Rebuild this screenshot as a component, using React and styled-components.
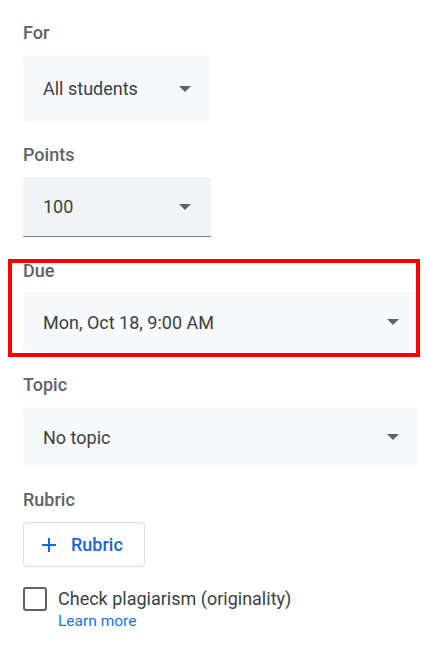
import React from "react";
import styled, { createGlobalStyle } from "styled-components";

const Global = createGlobalStyle`
  html, body { margin: 0; padding: 0; background: #ffffff; }
  body { font-family: Roboto, "Noto Sans", Arial, sans-serif; -webkit-font-smoothing: antialiased; }
  * { box-sizing: border-box; }
`;

const Page = styled.div`
  display: flex;
  flex-direction: column;
  gap: 21px;
  padding: 21px 11px 0 23px;
  width: 429px;
`;

const Section = styled.div`
  position: relative;
  display: flex;
  flex-direction: column;
  align-items: flex-start;
  ${(p) => p.$highlight && `
    margin-top: 1px;
    &::after {
      content: "";
      position: absolute;
      left: -15px;
      top: 0px;
      right: -2px;
      bottom: -5px;
      border: 4px solid #ff0000;
      pointer-events: none;
    }
  `}
`;

const Label = styled.div`
  font-size: 18px;
  line-height: 24px;
  font-weight: 500;
  color: #5f6368;
  margin-bottom: ${(p) => (p.$tight ? 9 : 10)}px;
`;

const Select = styled.div`
  display: flex;
  align-items: center;
  justify-content: space-between;
  width: ${(p) => (p.$full ? "100%" : "188px")};
  height: ${(p) => p.$h || 60}px;
  padding: 0 ${(p) => (p.$full ? 19 : 20)}px 0 20px;
  background: ${(p) => (p.$filled ? "#f1f3f4" : "#f8f9fa")};
  border-radius: ${(p) => (p.$filled ? "4px 4px 0 0" : "4px")};
  border-bottom: ${(p) => (p.$filled ? "1px solid #80868b" : "none")};
  font-size: 18px;
  color: #3c4043;
`;

const Arrow = styled.span`
  width: 0;
  height: 0;
  border-left: 6px solid transparent;
  border-right: 6px solid transparent;
  border-top: 6px solid #5f6368;
`;

const OutlineButton = styled.button`
  display: inline-flex;
  align-items: center;
  gap: 10px;
  height: 45px;
  padding: 0 21px 0 13px;
  background: #ffffff;
  border: 1px solid #dadce0;
  border-radius: 4px;
  font-family: inherit;
  font-size: 18px;
  font-weight: 500;
  color: #1967d2;
  cursor: pointer;
`;

const CheckRow = styled.div`
  display: flex;
  align-items: flex-start;
  gap: 11px;
  margin-top: -1px;
`;

const Box = styled.span`
  width: 24px;
  height: 24px;
  border: 2.5px solid #5f6368;
  border-radius: 3px;
  flex: none;
`;

const CheckText = styled.div`
  display: flex;
  flex-direction: column;
`;

const CheckLabel = styled.span`
  font-size: 18px;
  line-height: 24px;
  color: #3c4043;
`;

const Link = styled.a`
  font-size: 15.5px;
  line-height: 20px;
  color: #1a73e8;
  text-decoration: none;
`;

const PlusIcon = () => (
  <svg width="24" height="24" viewBox="0 0 24 24" fill="#1967d2">
    <path d="M19 13h-6v6h-2v-6H5v-2h6V5h2v6h6v2z" />
  </svg>
);

export default function App() {
  return (
    <>
      <Global />
      <Page>
        <Section>
          <Label>For</Label>
          <Select $h={67}>
            All students
            <Arrow />
          </Select>
        </Section>
        <Section>
          <Label>Points</Label>
          <Select $filled>
            100
            <Arrow />
          </Select>
        </Section>
        <Section $highlight>
          <Label $tight>Due</Label>
          <Select $full>
            Mon, Oct 18, 9:00 AM
            <Arrow />
          </Select>
        </Section>
        <Section>
          <Label>Topic</Label>
          <Select $full>
            No topic
            <Arrow />
          </Select>
        </Section>
        <Section>
          <Label>Rubric</Label>
          <OutlineButton>
            <PlusIcon />
            Rubric
          </OutlineButton>
        </Section>
        <CheckRow>
          <Box />
          <CheckText>
            <CheckLabel>Check plagiarism (originality)</CheckLabel>
            <Link href="#">Learn more</Link>
          </CheckText>
        </CheckRow>
      </Page>
    </>
  );
}
